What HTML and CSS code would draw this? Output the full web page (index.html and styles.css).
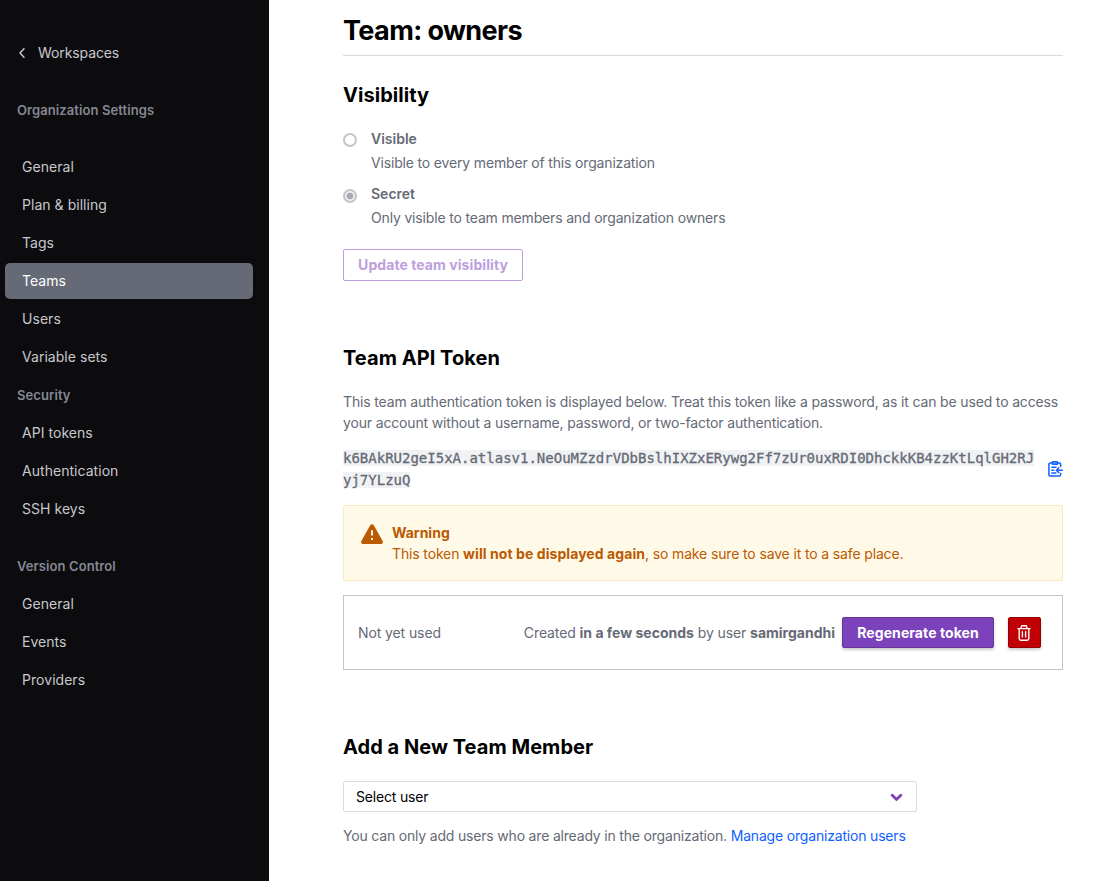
FILE: index.html
```html
<!DOCTYPE html>
<html lang="en">
<head>
<meta charset="utf-8">
<title>Team: owners</title>
<link rel="stylesheet" href="styles.css">
</head>
<body>
<div class="app">
  <nav class="sidebar">
    <a class="back"><svg width="8" height="12" viewBox="0 0 8 12"><path d="M6 1.8 2 6l4 4.2" fill="none" stroke="currentColor" stroke-width="1.5" stroke-linecap="round" stroke-linejoin="round"/></svg><span>Workspaces</span></a>
    <div class="group-title org">Organization Settings</div>
    <ul class="menu">
      <li class="item">General</li>
      <li class="item">Plan &amp; billing</li>
      <li class="item">Tags</li>
      <li class="item active">Teams</li>
      <li class="item">Users</li>
      <li class="item">Variable sets</li>
    </ul>
    <div class="group-title">Security</div>
    <ul class="menu">
      <li class="item">API tokens</li>
      <li class="item">Authentication</li>
      <li class="item">SSH keys</li>
    </ul>
    <div class="group-title version">Version Control</div>
    <ul class="menu">
      <li class="item">General</li>
      <li class="item">Events</li>
      <li class="item">Providers</li>
    </ul>
  </nav>
  <main class="content">
    <h1>Team: owners</h1>
    <section class="visibility">
      <h2>Visibility</h2>
      <div class="option">
        <span class="radio"></span>
        <div><div class="option-name">Visible</div><div class="option-help">Visible to every member of this organization</div></div>
      </div>
      <div class="option">
        <span class="radio checked"></span>
        <div><div class="option-name">Secret</div><div class="option-help">Only visible to team members and organization owners</div></div>
      </div>
      <button class="btn outline">Update team visibility</button>
    </section>
    <section class="api">
      <h2>Team API Token</h2>
      <p class="intro">This team authentication token is displayed below. Treat this token like a password, as it can be used to access<br>your account without a username, password, or two-factor authentication.</p>
      <div class="token-row">
        <div class="token"><code>k6BAkRU2geI5xA.atlasv1.NeOuMZzdrVDbBslhIXZxERywg2Ff7zUr0uxRDI0DhckkKB4zzKtLqlGH2RJ<br>yj7YLzuQ</code></div>
        <svg class="copy" width="16" height="16" viewBox="0 0 16 16" fill="none" stroke="currentColor" stroke-width="1.5" stroke-linecap="round" stroke-linejoin="round"><path d="M5.3 1.9H3.5A1.6 1.6 0 0 0 1.9 3.5v10a1.6 1.6 0 0 0 1.6 1.6h8.6a1.6 1.6 0 0 0 1.6-1.6v-1M10.8 1.9h1.3a1.6 1.6 0 0 1 1.6 1.6v2"/><rect x="5.2" y=".8" width="5.5" height="2.4" rx=".8" fill="#7da9ff"/><path d="M4.9 6.2h4M4.9 9.2h1.8M4.9 12h4M15.3 9.2H9.6M11.8 6.8 9.4 9.2l2.4 2.4"/></svg>
      </div>
      <div class="warning">
        <svg width="22" height="20" viewBox="0 0 22 20"><path d="M9.2 1.2a2.1 2.1 0 0 1 3.6 0l8.8 15.7a2 2 0 0 1-1.8 3.1H2.2a2 2 0 0 1-1.8-3.1z" fill="#bb5a00"/><path d="M11 6.2v5.2M11 14.1v1.8" stroke="#fff9e8" stroke-width="1.9"/></svg>
        <div><strong>Warning</strong><div class="warning-text">This token <b>will not be displayed again</b>, so make sure to save it to a safe place.</div></div>
      </div>
      <div class="token-card">
        <span class="unused">Not yet used</span>
        <span class="created">Created <b>in a few seconds</b> by user <b>samirgandhi</b></span>
        <button class="btn primary">Regenerate token</button>
        <button class="btn danger" aria-label="Delete"><svg width="14" height="16" viewBox="0 0 14 16" fill="none" stroke="#fff" stroke-width="1.4" stroke-linecap="round" stroke-linejoin="round"><path d="M.9 3.6h12.2M2.2 3.8v9.7c0 1 .6 1.7 1.7 1.7h6.2c1.1 0 1.7-.7 1.7-1.7V3.8M4.2 3.4V2c0-.7.5-1.2 1.2-1.2h3.2c.7 0 1.2.5 1.2 1.2v1.4M5.4 6.8v5.1M8.6 6.8v5.1"/></svg></button>
      </div>
    </section>
    <section class="members">
      <h2>Add a New Team Member</h2>
      <div class="select"><span>Select user</span><svg width="13" height="9" viewBox="0 0 13 9"><path d="m2.2 3.2 4.3 4.2 4.3-4.2" fill="none" stroke="#7b42bc" stroke-width="2.8" stroke-linecap="round"/></svg></div>
      <p class="note">You can only add users who are already in the organization. <a class="link">Manage organization users</a></p>
    </section>
  </main>
</div>
</body>
</html>
```
FILE: styles.css
```css
* { box-sizing: border-box; }
body { margin: 0; background: #fff; color: #656a76; font: 400 14px/21px Inter, "Liberation Sans", sans-serif; }
h1, h2, p, ul { margin: 0; padding: 0; }
ul { list-style: none; }
b, strong { font-weight: 700; letter-spacing: 0; }
button { font-family: inherit; }
.app { display: flex; height: 881px; overflow: hidden; }
.sidebar { width: 269px; flex: none; background: #0c0c0e; color: #c7c8cc; padding: 43px 16px 0 5px; }
.back { display: flex; align-items: center; gap: 12px; height: 19px; padding-left: 13px; letter-spacing: -.1px; }
.group-title { height: 36px; padding-left: 12px; margin: 2px 0; font-size: 13px; line-height: 36px; font-weight: 600; color: #858893; letter-spacing: .09px; }
.group-title.org { margin: 30px 0 21px; }
.group-title.version { margin-top: 21px; }
.menu { display: flex; flex-direction: column; gap: 2px; }
.item { height: 36px; line-height: 36px; padding-left: 17px; border-radius: 5px; letter-spacing: .04px; }
.item.active { background: #656a76; color: #fff; }
.content { width: 720px; margin-left: 74px; letter-spacing: -.18px; }
h1 { height: 56px; padding-top: 14px; font-size: 27px; line-height: 33px; font-weight: 700; letter-spacing: -.6px; color: #000; border-bottom: 1px solid #dbdbdc; }
h2 { font-size: 20px; line-height: 28px; font-weight: 700; letter-spacing: .04px; color: #000; }
.visibility { padding-top: 25px; }
.visibility h2 { margin-bottom: 19px; }
.option { display: flex; gap: 14px; height: 55px; }
.option-name { font-weight: 600; letter-spacing: 0; }
.option-help { margin-top: 3px; letter-spacing: -.165px; }
.radio { width: 14px; height: 14px; margin-top: 5px; border: 2px solid #c4c5cb; border-radius: 50%; }
.radio.checked { margin-top: 6px; background: radial-gradient(circle, #a9aab2 0 3px, #efeff1 3.7px); }
.btn { border: 1px solid; border-radius: 2px; font-size: 14px; font-weight: 700; line-height: 20px; padding: 0; letter-spacing: .07px; }
.outline { display: block; width: 180px; height: 32px; margin-top: 11px; border-color: #bd9fde; background: #fff; color: #bd9fde; }
.api { padding-top: 63px; }
.intro { margin-top: 19px; white-space: nowrap; letter-spacing: -.157px; }
.token-row { display: flex; justify-content: space-between; align-items: center; height: 44px; margin-top: 14px; letter-spacing: 0; }
.token code { font: 400 14px/22px "DejaVu Sans Mono", monospace; background: #f1f2f3; -webkit-text-stroke: .3px #656a76; }
.copy { color: #1060ff; }
.warning { display: flex; gap: 9px; height: 76px; margin-top: 14px; padding: 16px 17px; border: 1px solid #fbeabf; border-radius: 2px; background: #fff9e8; color: #bb5a00; letter-spacing: -.14px; }
.warning svg { margin-top: 2px; }
.warning b { letter-spacing: .07px; }
.token-card { display: flex; align-items: center; height: 75px; margin-top: 14px; padding: 0 21px 0 14px; border: 1px solid #c2c5cb; letter-spacing: -.1px; }
.created { margin-left: auto; margin-right: 7px; }
.primary { width: 152px; height: 31px; background: #7b42bc; border-color: #633699; color: #fff; box-shadow: 0 2px 3px #0003; }
.danger { display: flex; align-items: center; justify-content: center; width: 33px; height: 31px; margin-left: 14px; padding-right: 1px; background: #c00005; border-color: #940004; box-shadow: 0 2px 3px #0003; }
.members { padding-top: 63px; }
.select { display: flex; align-items: center; justify-content: space-between; width: 574px; height: 31px; margin-top: 20px; padding: 0 13px 0 12px; border: 1px solid #dbdbdc; border-radius: 2px; color: #000; }
.note { margin-top: 13px; letter-spacing: -.185px; }
.link { color: #1060ff; }
```
